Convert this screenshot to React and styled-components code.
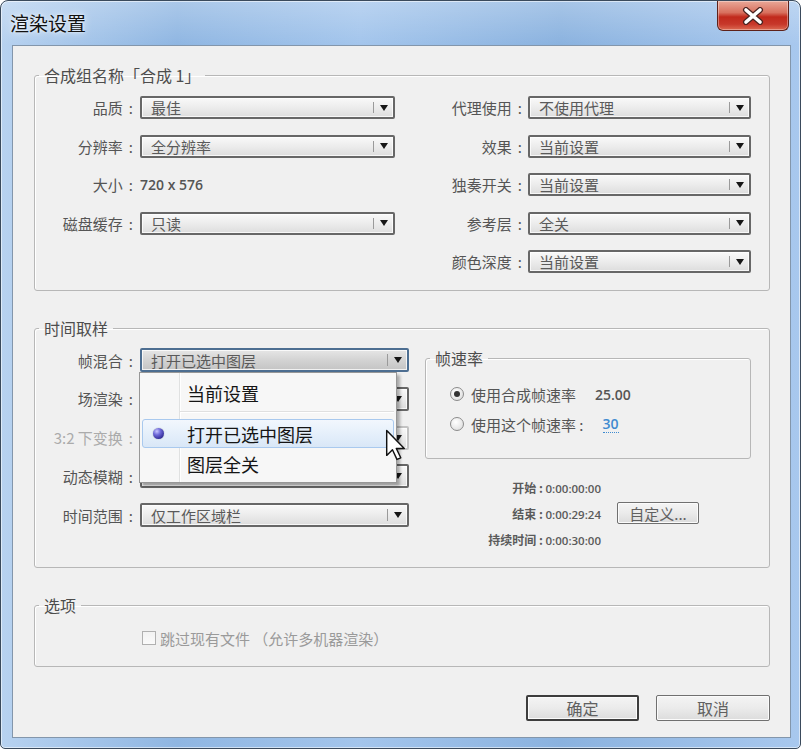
import React from "react";
import styled, { createGlobalStyle } from "styled-components";

const GlobalStyle = createGlobalStyle`
  html, body {
    margin: 0;
    padding: 0;
    background: #ffffff;
  }
  body {
    font-family: "Noto Sans CJK SC", "Noto Sans", sans-serif;
  }
`;

/* ══ WINDOW FRAME ══ */
const Window = styled.div`
  width: 801px;
  height: 749px;
  box-sizing: border-box;
  border: 1px solid #3a4a5c;
  border-radius: 8px 8px 5px 5px;
  background:
    linear-gradient(180deg, rgba(255, 255, 255, 0.25) 0px, rgba(255, 255, 255, 0) 44px),
    linear-gradient(90deg, #b7d2f0 0%, #8fb6e2 22%, #a3c5ec 45%, #8ab2df 70%, #a8c8ee 100%);
  box-shadow: inset 0 0 0 1px rgba(255, 255, 255, 0.55);
  display: flex;
  flex-direction: column;
  overflow: hidden;
`;

const TitleBar = styled.div`
  height: 44px;
  flex-shrink: 0;
  display: flex;
  align-items: flex-start;
`;

const Title = styled.div`
  margin: 9px 0 0 9px;
  font-size: 19px;
  line-height: 26px;
  color: #111111;
  text-shadow: 0 0 8px rgba(255, 255, 255, 0.9), 0 0 3px rgba(255, 255, 255, 0.8);
`;

const CloseButton = styled.div`
  margin-left: auto;
  margin-right: 11px;
  width: 72px;
  height: 30px;
  box-sizing: border-box;
  border: 1px solid #5e2119;
  border-top: none;
  border-radius: 0 0 6px 6px;
  background: linear-gradient(180deg, #e9a898 0%, #d8705e 40%, #c1291c 55%, #c7382a 80%, #dc6a52 100%);
  box-shadow: inset 0 0 0 1px rgba(255, 255, 255, 0.35);
  display: flex;
  align-items: center;
  justify-content: center;
`;

const Content = styled.div`
  flex: 1;
  margin: 0 9px 10px 11px;
  box-sizing: border-box;
  border: 1px solid #8396ab;
  background: #f0f0f0;
  padding: 19px 20px 16px 21px;
  display: flex;
  flex-direction: column;
`;

/* ══ GROUP BOX ══ */
const Group = styled.fieldset`
  margin: 0 0 ${(p) => p.$gap || 0}px;
  padding: 0;
  border: 1px solid #b7b7b7;
  border-radius: 3px;
  box-shadow: inset 1px 1px 0 #ffffff;
  min-width: 0;
`;

const Legend = styled.legend`
  margin-left: 4px;
  padding: 0 5px;
  font-size: 16px;
  line-height: 20px;
  color: #4d4d4d;
`;

const CompGrid = styled.div`
  display: grid;
  grid-template-columns: 105px 255px 133px 223px;
  grid-auto-rows: 23px;
  row-gap: 15.5px;
  padding: 11px 0 17px;
`;

const LabelBox = styled.div`
  display: flex;
  align-items: center;
  justify-content: flex-end;
  padding-right: ${(p) => p.$pad || 7}px;
  font-size: 15px;
  color: ${(p) => (p.$disabled ? "#ababab" : "#555555")};
  white-space: nowrap;
`;

const Colon = styled.span`
  margin-left: 6px;
`;

function Label({ children, pad, disabled }) {
  return (
    <LabelBox $pad={pad} $disabled={disabled}>
      {children}
      <Colon>:</Colon>
    </LabelBox>
  );
}

const Value = styled.div`
  display: flex;
  align-items: center;
  font-family: "Open Sans", "Liberation Sans", sans-serif;
  font-weight: 600;
  font-size: 14px;
  color: #555555;
`;

/* ══ DROPDOWN ══ */
const Select = styled.div`
  height: 100%;
  box-sizing: border-box;
  display: flex;
  align-items: center;
  border: 2px solid
    ${(p) => (p.$open ? "#4d6e91" : p.$disabled ? "#c3c3c3" : "#676767")};
  border-radius: 2px;
  background: ${(p) =>
    p.$open
      ? "linear-gradient(180deg, #e6e6e6 0%, #d3d3d3 50%, #c4c4c4 100%)"
      : "linear-gradient(180deg, #f9f9f9 0%, #ececec 50%, #dddddd 100%)"};
  box-shadow: inset 0 0 0 1px rgba(255, 255, 255, 0.75);
  color: #5a5a5a;
  font-size: 15px;
  position: relative;
`;

const SelectText = styled.span`
  flex: 1;
  padding-left: 9px;
  white-space: nowrap;
  overflow: hidden;
`;

const SelectArrow = styled.span`
  width: 19px;
  align-self: stretch;
  margin: 4px 0;
  border-left: 1px solid #9a9a9a;
  display: flex;
  align-items: center;
  justify-content: center;

  &::after {
    content: "";
    border-left: 4px solid transparent;
    border-right: 4px solid transparent;
    border-top: 6px solid #161616;
  }
`;

function Dropdown({ value, open, disabled, children }) {
  return (
    <Select $open={open} $disabled={disabled}>
      <SelectText>{value}</SelectText>
      <SelectArrow />
      {children}
    </Select>
  );
}

/* ══ POPUP MENU ══ */
const Menu = styled.div`
  position: absolute;
  top: 100%;
  left: -3px;
  margin-top: 2px;
  width: 258px;
  box-sizing: border-box;
  padding: 2px;
  z-index: 5;
  border: 1px solid #979797;
  background-color: #f7f7f7;
  background-image: linear-gradient(
    90deg,
    transparent 39px,
    #e0e1e1 39px,
    #e0e1e1 40px,
    #ffffff 40px,
    #ffffff 41px,
    transparent 41px
  );
  box-shadow: 3px 3px 3px rgba(0, 0, 0, 0.3);
`;

const MenuItem = styled.div`
  height: ${(p) => p.$h}px;
  box-sizing: border-box;
  display: flex;
  align-items: center;
  font-size: 18px;
  color: #151515;
  border: 1px solid ${(p) => (p.$active ? "#a9c9ee" : "transparent")};
  border-radius: 3px;
  background: ${(p) =>
    p.$active ? "linear-gradient(180deg, #f2f7fd 0%, #e3eefa 60%, #d9e7f7 100%)" : "transparent"};
`;

const MenuIcon = styled.span`
  width: 44px;
  align-self: stretch;
  display: flex;
  align-items: center;
  padding-left: 10px;
  box-sizing: border-box;
`;

const Dot = styled.span`
  width: 11px;
  height: 11px;
  border-radius: 50%;
  background: radial-gradient(circle at 35% 30%, #c9c6ff 0%, #6d68d8 35%, #2c2590 80%);
  box-shadow: 0 0 1px rgba(0, 0, 0, 0.5);
`;

const MenuSeparator = styled.div`
  height: 8px;
  margin-left: 38px;
  box-sizing: border-box;
  border-top: 1px solid #e0e0e0;

  &::after {
    content: "";
    display: block;
    height: 1px;
    background: #ffffff;
  }
`;

const Cursor = styled.svg`
  position: absolute;
  left: 245px;
  top: 56px;
  width: 21px;
  height: 32px;
`;

/* ══ TIME SAMPLING ══ */
const TimeBody = styled.div`
  display: flex;
  align-items: flex-start;
  padding: 10px 0 17px;
`;

const TimeGrid = styled.div`
  display: grid;
  grid-template-columns: 105px 269px;
  grid-auto-rows: 24px;
  row-gap: 14.8px;
`;

const SideColumn = styled.div`
  margin-left: 16px;
  width: 326px;
`;

const RateGroup = styled.fieldset`
  margin: 0;
  padding: 0;
  border: 1px solid #b7b7b7;
  border-radius: 3px;
  box-shadow: inset 1px 1px 0 #ffffff;
`;

const RateBody = styled.div`
  padding: 15px 0 23px 24px;
  display: flex;
  flex-direction: column;
  gap: 8px;
`;

const RadioRow = styled.div`
  height: 22px;
  display: flex;
  align-items: center;
  gap: 7px;
  font-size: 15px;
  color: #555555;
`;

const Radio = styled.span`
  width: 14px;
  height: 14px;
  box-sizing: border-box;
  border-radius: 50%;
  border: 1px solid #8b8b8b;
  background: radial-gradient(circle at 40% 35%, #ffffff 0%, #e4e4e4 70%, #d0d0d0 100%);
  display: flex;
  align-items: center;
  justify-content: center;

  &::after {
    content: "";
    width: 6px;
    height: 6px;
    border-radius: 50%;
    background: ${(p) => (p.$checked ? "#333333" : "transparent")};
  }
`;

const RateNumber = styled.span`
  margin-left: 12px;
  font-family: "Open Sans", "Liberation Sans", sans-serif;
  font-weight: 600;
  font-size: 14px;
  color: ${(p) => (p.$link ? "#3f8bd0" : "#555555")};
  border-bottom: ${(p) => (p.$link ? "1px dotted #3f8bd0" : "none")};
  line-height: 17px;
`;

const RangeGrid = styled.div`
  margin-top: 17px;
  display: grid;
  grid-template-columns: 176px 82px;
  column-gap: 16px;
  grid-auto-rows: 22px;
  row-gap: 4px;
  align-items: center;
`;

const RangeText = styled.div`
  text-align: right;
  font-size: 12px;
  font-weight: bold;
  color: #5a5a5a;
  white-space: nowrap;

  b {
    font-family: "Open Sans", "Liberation Sans", sans-serif;
    font-weight: 600;
    font-size: 11.5px;
  }
`;

const Button = styled.div`
  height: ${(p) => p.$h || 22}px;
  width: ${(p) => p.$w}px;
  box-sizing: border-box;
  display: flex;
  align-items: center;
  justify-content: center;
  border: ${(p) => (p.$default ? "2px solid #3d3d3d" : "1px solid #707070")};
  border-radius: 2px;
  background: linear-gradient(180deg, #f4f4f4 0%, #ebebeb 50%, #dcdcdc 100%);
  box-shadow: inset 0 0 0 1px #fbfbfb;
  font-size: ${(p) => p.$fs || 15}px;
  color: #606060;
`;

/* ══ OPTIONS ══ */
const OptionRow = styled.div`
  height: 22px;
  display: flex;
  align-items: center;
  gap: 4px;
  padding: 12px 0 17px 107px;
  font-size: 15px;
  color: #9a9a9a;
`;

const CheckBox = styled.span`
  width: 14px;
  height: 14px;
  box-sizing: border-box;
  border: 1px solid #b0b0b0;
  background: linear-gradient(180deg, #f2f2f2, #fafafa);
`;

const Footer = styled.div`
  margin-top: 28px;
  display: flex;
  justify-content: flex-end;
  gap: 17px;
`;

export default function App() {
  return (
    <>
      <GlobalStyle />
      <Window>
        <TitleBar>
          <Title>渲染设置</Title>
          <CloseButton>
            <svg width="22" height="18" viewBox="0 0 22 18">
              <path d="M4 3 L18 15 M18 3 L4 15" stroke="#4a2320" strokeWidth="6" strokeLinecap="round" />
              <path d="M4 3 L18 15 M18 3 L4 15" stroke="#ffffff" strokeWidth="3.6" strokeLinecap="round" />
            </svg>
          </CloseButton>
        </TitleBar>

        <Content>
          <Group $gap={27}>
            <Legend>合成组名称「合成 1」</Legend>
            <CompGrid>
              <Label>品质</Label>
              <Dropdown value="最佳" />
              <Label pad={6}>代理使用</Label>
              <Dropdown value="不使用代理" />

              <Label>分辨率</Label>
              <Dropdown value="全分辨率" />
              <Label pad={6}>效果</Label>
              <Dropdown value="当前设置" />

              <Label>大小</Label>
              <Value>720 x 576</Value>
              <Label pad={6}>独奏开关</Label>
              <Dropdown value="当前设置" />

              <Label>磁盘缓存</Label>
              <Dropdown value="只读" />
              <Label pad={6}>参考层</Label>
              <Dropdown value="全关" />

              <span />
              <span />
              <Label pad={6}>颜色深度</Label>
              <Dropdown value="当前设置" />
            </CompGrid>
          </Group>

          <Group $gap={27}>
            <Legend>时间取样</Legend>
            <TimeBody>
              <TimeGrid>
                <Label>帧混合</Label>
                <Dropdown value="打开已选中图层" open>
                  <Menu>
                    <MenuItem $h={36}>
                      <MenuIcon />
                      当前设置
                    </MenuItem>
                    <MenuSeparator />
                    <MenuItem $h={29} $active>
                      <MenuIcon>
                        <Dot />
                      </MenuIcon>
                      打开已选中图层
                    </MenuItem>
                    <MenuItem $h={32}>
                      <MenuIcon />
                      图层全关
                    </MenuItem>
                    <Cursor viewBox="0 0 13 20">
                      <path
                        d="M1 1 V16.5 L4.6 13 L7.4 19 L9.8 18 L7 12.2 H12 Z"
                        fill="#ffffff"
                        stroke="#111111"
                        strokeWidth="0.9"
                        strokeLinejoin="round"
                      />
                    </Cursor>
                  </Menu>
                </Dropdown>

                {/* these three lie under the open menu, only their right ends show */}
                <Label>场渲染</Label>
                <Dropdown value="" />

                <Label disabled>3:2 下变换</Label>
                <Dropdown value="" disabled />

                <Label>动态模糊</Label>
                <Dropdown value="" />

                <Label>时间范围</Label>
                <Dropdown value="仅工作区域栏" />
              </TimeGrid>

              <SideColumn>
                <RateGroup>
                  <Legend>帧速率</Legend>
                  <RateBody>
                    <RadioRow>
                      <Radio $checked />
                      使用合成帧速率
                      <RateNumber>25.00</RateNumber>
                    </RadioRow>
                    <RadioRow>
                      <Radio />
                      使用这个帧速率 :
                      <RateNumber $link>30</RateNumber>
                    </RadioRow>
                  </RateBody>
                </RateGroup>

                <RangeGrid>
                  <RangeText>
                    开始 : <b>0:00:00:00</b>
                  </RangeText>
                  <span />
                  <RangeText>
                    结束 : <b>0:00:29:24</b>
                  </RangeText>
                  <Button $w={82}>自定义...</Button>
                  <RangeText>
                    持续时间 : <b>0:00:30:00</b>
                  </RangeText>
                  <span />
                </RangeGrid>
              </SideColumn>
            </TimeBody>
          </Group>

          <Group>
            <Legend>选项</Legend>
            <OptionRow>
              <CheckBox />
              跳过现有文件 （允许多机器渲染）
            </OptionRow>
          </Group>

          <Footer>
            <Button $w={113} $h={26} $fs={16} $default>
              确定
            </Button>
            <Button $w={114} $h={26} $fs={16}>
              取消
            </Button>
          </Footer>
        </Content>
      </Window>
    </>
  );
}
